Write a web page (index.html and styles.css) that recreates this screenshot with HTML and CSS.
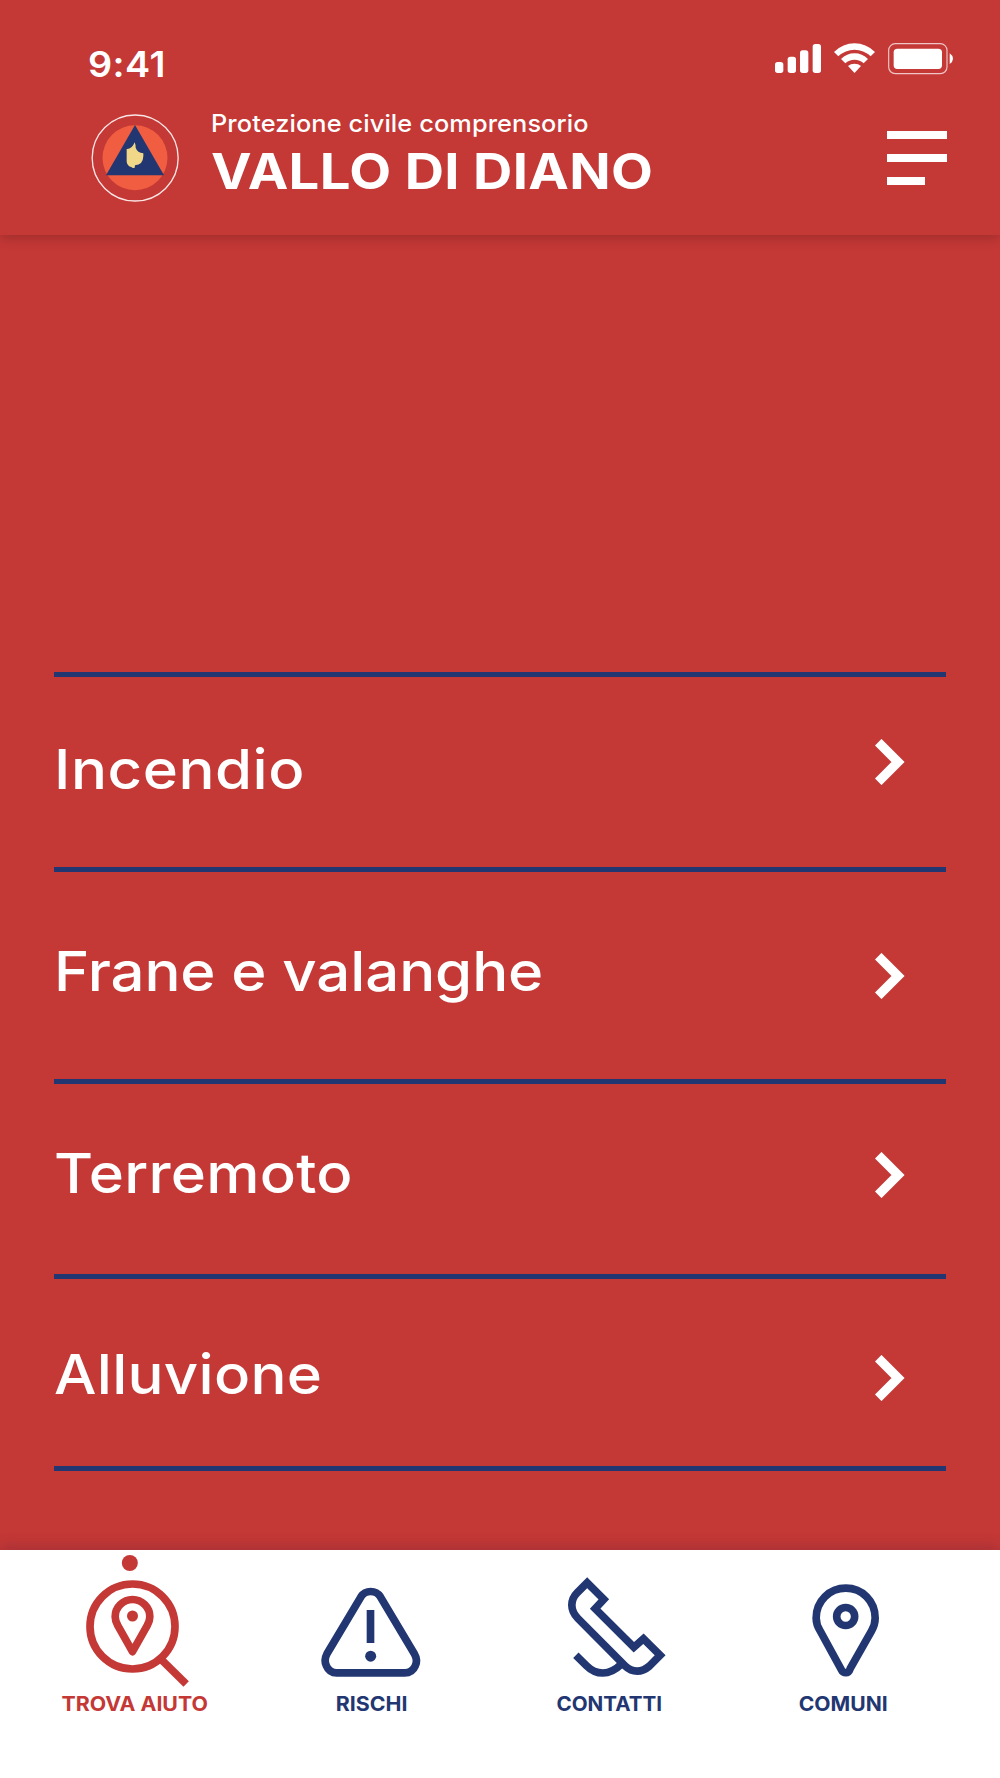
FILE: index.html
```html
<!DOCTYPE html>
<html lang="it">
<head>
    <meta charset="UTF-8">
    <meta name="viewport" content="width=device-width, initial-scale=1.0">
    <title>Protezione civile Vallo di Diano</title>
    <link rel="stylesheet" href="styles.css">
</head>
<body>

<header class="header">
    <div class="status-bar">
        <span class="time">9:41</span>
        <svg class="status-icons" viewBox="75 66 540 99" fill="#fff">
            <!-- signal -->
            <rect x="75" y="126" width="25" height="33" rx="8"/>
            <rect x="113" y="110" width="25" height="49" rx="8"/>
            <rect x="150" y="91" width="25" height="68" rx="8"/>
            <rect x="188" y="72" width="25" height="87" rx="8"/>
            <!-- wifi -->
            <path d="M252 96 Q279 70 313.500 70 Q348 70 375 96 L362 109 Q341 89 313.500 89 Q286 89 265 109 Z"/>
            <path d="M273 117 Q290 100 313.500 100 Q337 100 354 117 L341 130 Q330 119 313.500 119 Q297 119 286 130 Z"/>
            <path d="M294 138 Q302 131 313.500 131 Q325 131 333 138 L313.500 159 Z"/>
            <!-- battery -->
            <rect x="416" y="71" width="175" height="90" rx="20" fill="none" stroke="#efc6c5" stroke-width="3.500"/>
            <rect x="431" y="86" width="145" height="61" rx="11"/>
            <path d="M599 100 Q609 107 609 116 Q609 125 599 132 Z"/>
        </svg>
    </div>
    <div class="brand">
        <svg class="logo" viewBox="94 282 264 264">
            <circle cx="226.500" cy="414" r="129" fill="none" stroke="#fae6e5" stroke-width="4"/>
            <circle cx="226" cy="413.500" r="97.500" fill="#f15d40"/>
            <path d="M226 315 L313 466 H139 Z" fill="#223771"/>
            <path d="M201 387 Q217 388 225 367 Q228 374 228 383 Q233 398 251 400 V409 Q250 435 226 436 L225 443 Q219 446 215 441 Q203 438 201 425 Z" fill="#f1d888"/>
        </svg>
        <div class="brand-text">
            <p class="subtitle">Protezione civile comprensorio</p>
            <h1>VALLO DI DIANO</h1>
        </div>
        <button class="menu" aria-label="Menu">
            <span></span>
            <span></span>
            <span></span>
        </button>
    </div>
</header>

<main>
    <ul class="risk-list">
        <li class="incendio">
            <a href="#">Incendio</a>
            <svg class="arrow" viewBox="0 0 30 46"><path d="M3.200 3.200 L23 23 L3.200 42.800"/></svg>
        </li>
        <li class="frane">
            <a href="#">Frane e valanghe</a>
            <svg class="arrow" viewBox="0 0 30 46"><path d="M3.200 3.200 L23 23 L3.200 42.800"/></svg>
        </li>
        <li class="terremoto">
            <a href="#">Terremoto</a>
            <svg class="arrow" viewBox="0 0 30 46"><path d="M3.200 3.200 L23 23 L3.200 42.800"/></svg>
        </li>
        <li class="alluvione">
            <a href="#">Alluvione</a>
            <svg class="arrow" viewBox="0 0 30 46"><path d="M3.200 3.200 L23 23 L3.200 42.800"/></svg>
        </li>
    </ul>
</main>

<nav class="tab-bar">
    <a href="#" class="tab active">
        <svg viewBox="120.500 60 330 432">
            <circle class="dot" cx="270" cy="99" r="24"/>
            <circle cx="278" cy="289.500" r="127.500"/>
            <path d="M365 389 L439 462"/>
            <path d="M278 208.500 C306 208.500 330 231 330 260 Q330 272 322 287 L278 365 L234 287 Q226 272 226 260 C226 231 250 208.500 278 208.500 Z" stroke-linejoin="round"/>
            <circle class="dot" cx="278" cy="258" r="16.500"/>
        </svg>
        <span class="trova-label">TROVA AIUTO</span>
    </a>
    <a href="#" class="tab">
        <svg viewBox="80 60 330 432">
            <path d="M212 200 Q222 184.500 241 184.500 Q260 184.500 270 200 L372 371 Q383 390 375 407 Q366 428.500 343 428.500 H139 Q117 428.500 108 407 Q100 390 110 371 Z"/>
            <path d="M240.500 240 V339"/>
            <circle class="dot" cx="241" cy="378.500" r="16.500"/>
        </svg>
        <span class="rischi-label">RISCHI</span>
    </a>
    <a href="#" class="tab">
        <svg viewBox="104.500 60 330 432">
            <path d="M201 158 L251 208 L225 236 L341 352 L370 326 L420 376 L388 408 Q370 423.500 351 423.500 Q331 423.500 315 408 L173 265 Q155 247 155 225 Q155 204 171 188 Z"/>
            <path d="M167 376 L199 407 Q221 429 248 429 Q276 429 305 401"/>
        </svg>
        <span class="contatti-label">CONTATTI</span>
    </a>
    <a href="#" class="tab">
        <svg viewBox="84.500 60 330 432">
            <path d="M258 174.500 C307 174.500 346 213 346 264 Q346 284 335 303 L271 416 Q267 428 258 428 Q249 428 245 420 L181 303 Q169 284 169 264 C169 213 209 174.500 258 174.500 Z"/>
            <circle cx="257.500" cy="259.500" r="27"/>
        </svg>
        <span class="comuni-label">COMUNI</span>
    </a>
</nav>

</body>
</html>
```

FILE: styles.css
```css
* {
    box-sizing: border-box;
}
body {
    font-family: Inter, sans-serif;
    margin: 0;
    height: 1778px;
    display: flex;
    flex-direction: column;
    background-color: #c43836;
    color: #fff;
}
a {
    color: inherit;
    text-decoration: none;
}

/* header */
.header {
    height: 235px;
    box-shadow: 0 3px 12px rgba(0, 0, 0, 0.2);
}
.status-bar {
    display: flex;
    justify-content: space-between;
    align-items: flex-start;
    height: 109px;
    padding: 42px 45px 0 88px;
}
.time {
    margin-top: 4px;
    font-size: 36px;
    line-height: 36px;
    font-weight: 600;
    letter-spacing: 0.4px;
    transform: scaleX(1.05);
    transform-origin: left;
}
.status-icons {
    width: 180px;
    height: 33px;
}
.brand {
    display: flex;
    align-items: flex-start;
    padding: 0 53px 0 91px;
}
.logo {
    width: 88px;
    height: 88px;
    margin-top: 5px;
}
.brand-text {
    flex: 1;
    padding: 1px 0 0 32px;
    white-space: nowrap;
}
.subtitle {
    margin: 0 0 10px;
    font-size: 24px;
    line-height: 28px;
    font-weight: 500;
    letter-spacing: 0.1px;
    transform: scaleX(1.055);
    transform-origin: left;
}
h1 {
    margin: 0;
    font-size: 49px;
    line-height: 48px;
    font-weight: 700;
    letter-spacing: 0.3px;
    transform: scaleX(1.11);
    transform-origin: left;
}
.menu {
    width: 60px;
    margin-top: 22px;
    padding: 0;
    border: none;
    background: none;
    display: flex;
    flex-direction: column;
    gap: 15px;
}
.menu span {
    width: 60px;
    height: 8px;
    background-color: #fff;
}
.menu span:last-child {
    width: 38px;
}

/* list of risks */
main {
    height: 1315px;
    padding: 437px 54px 0;
}
.risk-list {
    list-style: none;
    margin: 0;
    padding: 0;
    border-top: 5px solid #223771;
}
.risk-list li {
    display: flex;
    justify-content: space-between;
    align-items: flex-start;
    padding-right: 41px;
    border-bottom: 5px solid #223771;
    font-size: 55px;
    line-height: 60px;
    font-weight: 500;
}
.risk-list a {
    transform: scaleX(1.09);
    transform-origin: left;
}
.incendio {
    height: 195px;
    padding-top: 62px;
    letter-spacing: 0.5px;
}
.frane {
    height: 212px;
    padding-top: 69px;
    letter-spacing: -0.1px;
}
.terremoto {
    height: 195px;
    padding-top: 59px;
    letter-spacing: 0.25px;
}
.alluvione {
    height: 192px;
    padding-top: 65px;
    letter-spacing: 0.25px;
}
.arrow {
    width: 30px;
    height: 46px;
}
.frane .arrow {
    margin-top: 12px;
}
.terremoto .arrow {
    margin-top: 9px;
}
.alluvione .arrow {
    margin-top: 11px;
}
.arrow path {
    fill: none;
    stroke: #fff;
    stroke-width: 9.3;
}

/* bottom tabs */
.tab-bar {
    height: 228px;
    padding-left: 17px;
    display: grid;
    grid-template-columns: 236px 237px 239px 228px;
    background-color: #fff;
    box-shadow: 0 -3px 14px rgba(34, 20, 60, 0.2);
}
.tab {
    display: flex;
    flex-direction: column;
    align-items: center;
    color: #223771;
    font-size: 20px;
    line-height: 20px;
    font-weight: 700;
    white-space: nowrap;
}
.tab.active {
    color: #c43836;
}
.tab svg {
    width: 110px;
    height: 144px;
    overflow: visible;
    fill: none;
    stroke: currentColor;
    stroke-width: 23;
}
.tab .dot {
    fill: currentColor;
    stroke: none;
}
.trova-label,
.rischi-label {
    transform: scaleX(1.066);
}
.contatti-label {
    transform: scaleX(1.03);
}
.comuni-label {
    transform: scaleX(1.055);
}
```
